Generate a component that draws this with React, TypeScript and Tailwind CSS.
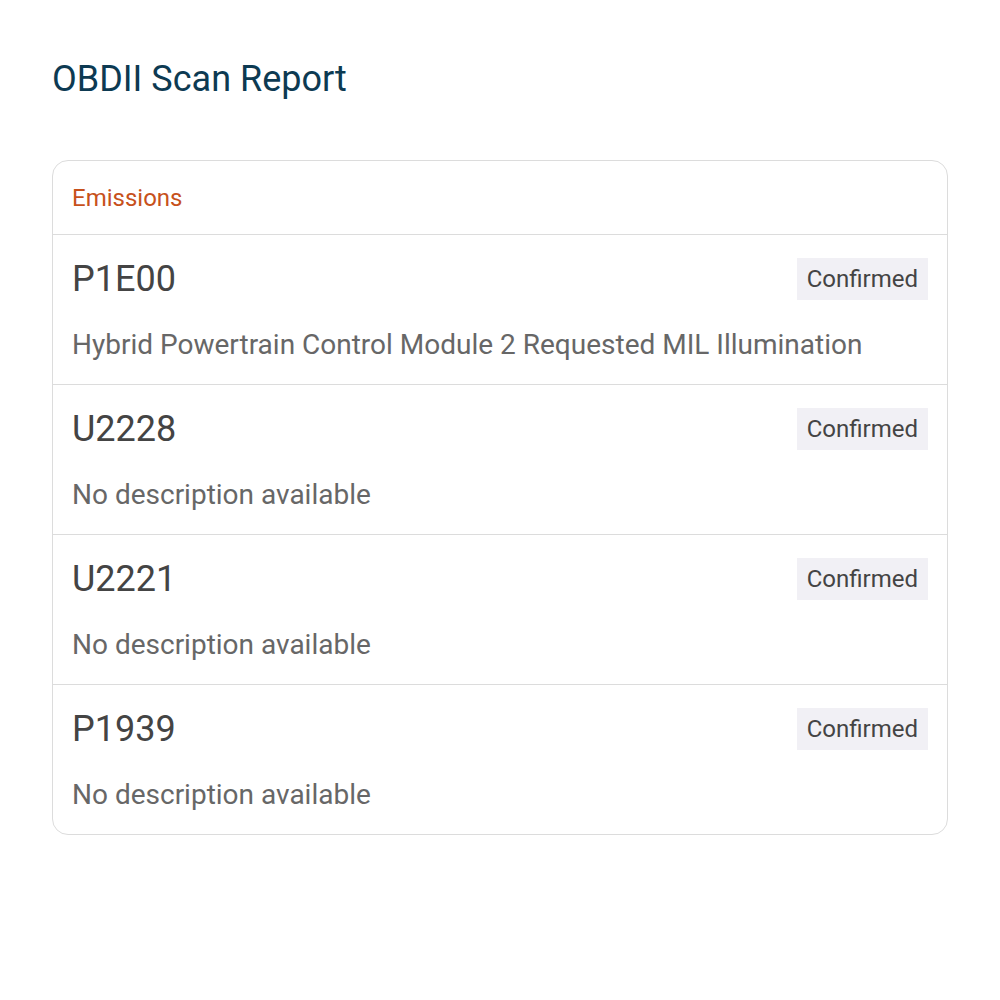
const CODES = [
  { code: "P1E00", status: "Confirmed", desc: "Hybrid Powertrain Control Module 2 Requested MIL Illumination" },
  { code: "U2228", status: "Confirmed", desc: "No description available" },
  { code: "U2221", status: "Confirmed", desc: "No description available" },
  { code: "P1939", status: "Confirmed", desc: "No description available" },
];

export default function App() {
  return (
    <div className="min-h-screen bg-white px-[52px] pt-[59px] font-['Roboto',sans-serif]">
      <h1 className="text-[36px] leading-[40px] text-[#0d3a52]">OBDII Scan Report</h1>

      <div className="mt-[61px] overflow-hidden rounded-[16px] border border-[#dcdcdc]">
        {/* section header */}
        <div className="flex h-[73px] items-center px-[19px] text-[24px] text-[#c7511b]">Emissions</div>

        {CODES.map((c) => (
          <div key={c.code} className="border-t border-[#dcdcdc] px-[19px] pt-[23px] pb-[21px]">
            <div className="flex items-center justify-between">
              <span className="text-[36px] leading-[42px] text-[#444444]">{c.code}</span>
              <span className="bg-[#f1f0f5] px-[10px] py-[7px] text-[24px] leading-[28px] text-[#444444]">
                {c.status}
              </span>
            </div>
            <p className="mt-[27px] text-[28px] leading-[36px] text-[#676767]">{c.desc}</p>
          </div>
        ))}
      </div>
    </div>
  );
}
